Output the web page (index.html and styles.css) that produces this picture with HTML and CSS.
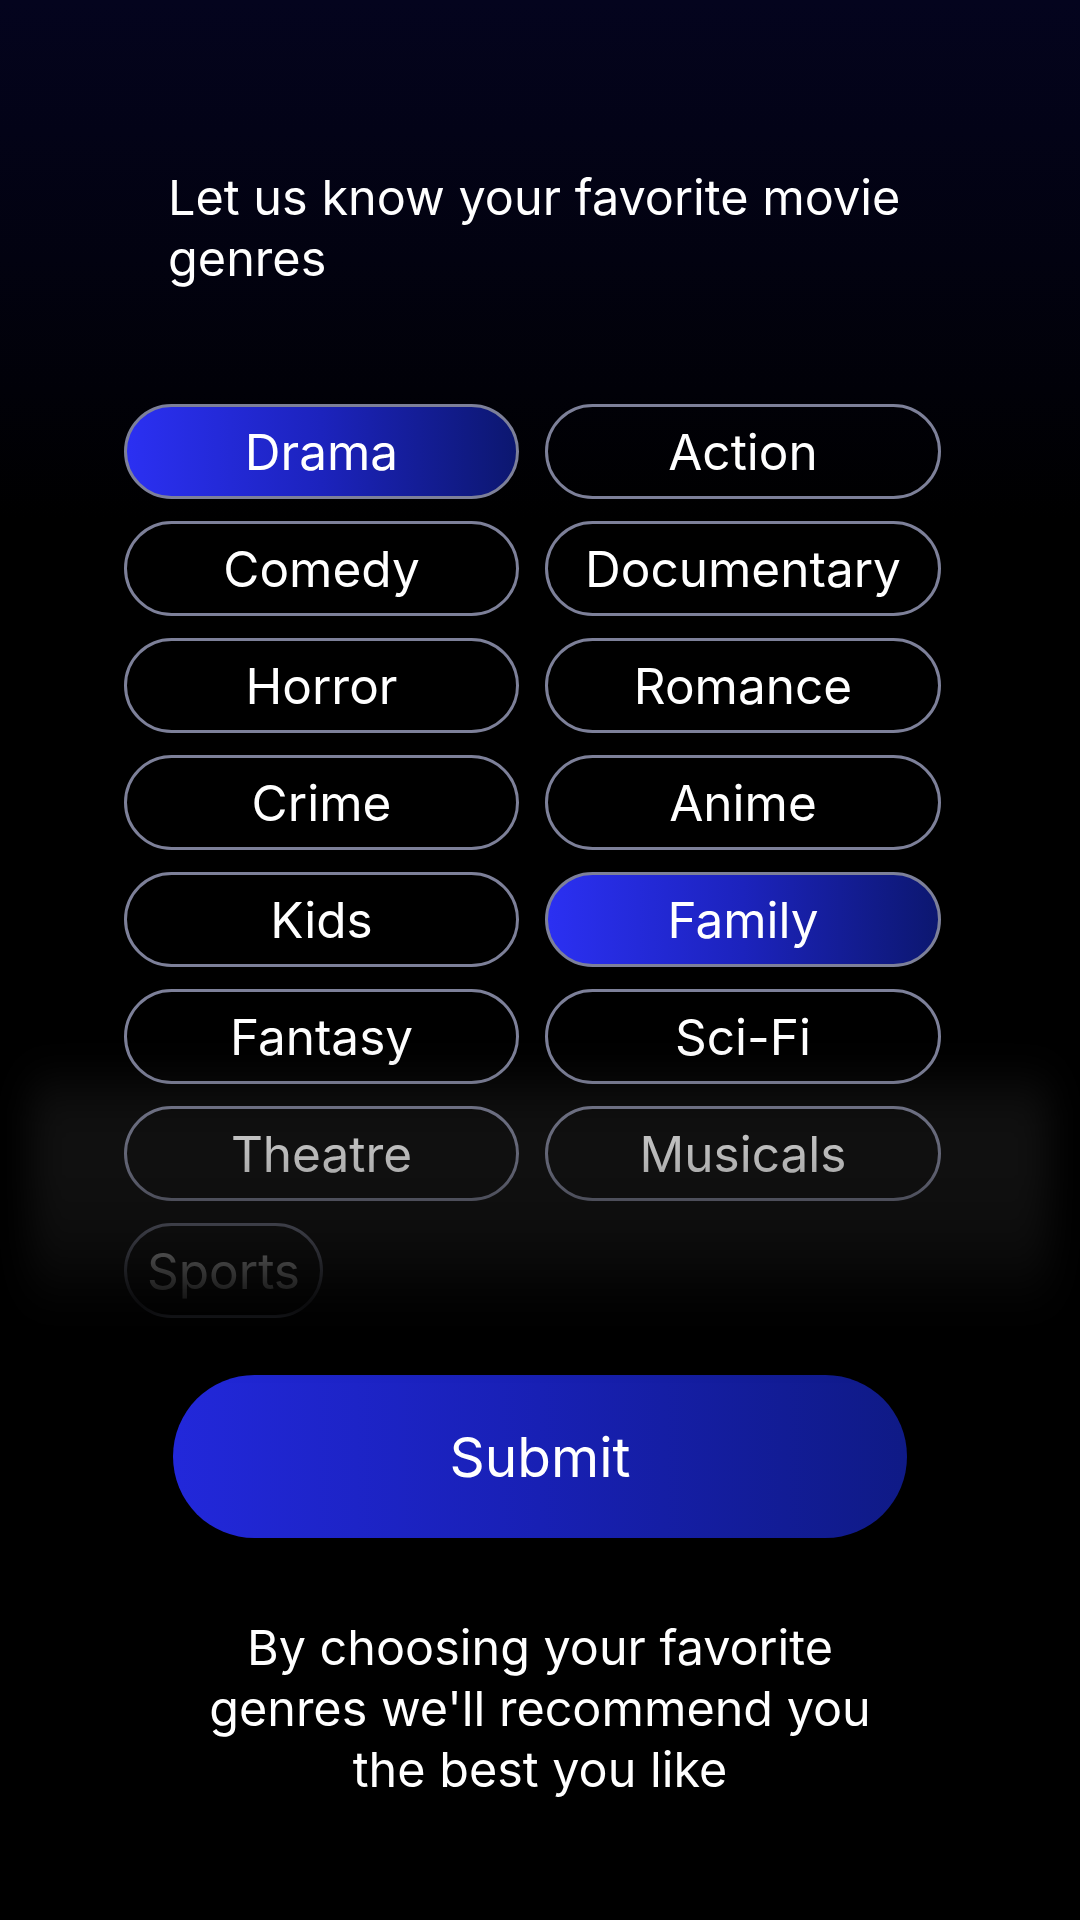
FILE: index.html
```html
<!DOCTYPE html>
<html lang="en">

<head>
    <meta charset="UTF-8">
    <meta name="viewport" content="width=device-width, initial-scale=1.0">
    <title>Genres</title>
    <link rel="stylesheet" href="styles.css">
</head>

<body>
    <h1 class="title">Let us know your favorite movie genres</h1>

    <div class="genre-list">
        <div class="genre-grid">
            <button class="chip selected">Drama</button>
            <button class="chip">Action</button>
            <button class="chip">Comedy</button>
            <button class="chip">Documentary</button>
            <button class="chip">Horror</button>
            <button class="chip">Romance</button>
            <button class="chip">Crime</button>
            <button class="chip">Anime</button>
            <button class="chip">Kids</button>
            <button class="chip selected">Family</button>
            <button class="chip">Fantasy</button>
            <button class="chip">Sci-Fi</button>
            <button class="chip">Theatre</button>
            <button class="chip">Musicals</button>
            <button class="chip short">Sports</button>
        </div>
        <div class="fade"></div>
    </div>

    <button class="submit">Submit</button>

    <p class="hint">By choosing your favorite genres we'll recommend you the best you like</p>
</body>

</html>
```

FILE: styles.css
```css
body {
    margin: 0;
    width: 1080px;
    min-height: 1920px;
    background: linear-gradient(to bottom, #04041e 0px, #020210 260px, #000 520px, #000 100%);
    font-family: Inter, 'Liberation Sans', sans-serif;
    color: #fff;
}

.title {
    margin: 0;
    padding: 167px 0 0 168px;
    width: 780px;
    font-size: 48.6px;
    font-weight: 400;
    line-height: 61px;
}

.genre-list {
    position: relative;
    margin-top: 115px;
    padding-left: 124px;
}

.genre-grid {
    display: grid;
    grid-template-columns: 395px 396px;
    column-gap: 26px;
    row-gap: 22px;
}

.chip {
    height: 95px;
    border: 3px solid #7d8099;
    border-radius: 48px;
    background: transparent;
    color: #fff;
    font-family: Inter, 'Liberation Sans', sans-serif;
    font-size: 49.5px;
    padding: 0;
}

.chip.selected {
    background: linear-gradient(90deg, #2b30f2 0%, #1c23bd 50%, #0c1770 100%);
}

.chip.short {
    justify-self: start;
    padding: 0 20px;
}

/* bottom of the list fades out under a grey veil */
.fade {
    position: absolute;
    left: 30px;
    right: 30px;
    top: 655px;
    height: 280px;
    background: linear-gradient(to bottom,
            rgba(60, 60, 60, 0) 0%,
            rgba(60, 60, 60, 0.26) 18%,
            rgba(45, 45, 45, 0.36) 40%,
            rgba(18, 18, 18, 0.7) 65%,
            rgba(0, 0, 0, 1) 92%);
    filter: blur(18px);
    pointer-events: none;
}

.submit {
    display: block;
    width: 734px;
    height: 163px;
    margin: 57px auto 0;
    border: none;
    border-radius: 82px;
    background: linear-gradient(90deg, #2228da 0%, #1820b4 50%, #0f1a86 100%);
    color: #fff;
    font-family: Inter, 'Liberation Sans', sans-serif;
    font-size: 55px;
}

.hint {
    margin: 79px auto 0;
    width: 720px;
    text-align: center;
    font-size: 48.5px;
    line-height: 61px;
}
```
